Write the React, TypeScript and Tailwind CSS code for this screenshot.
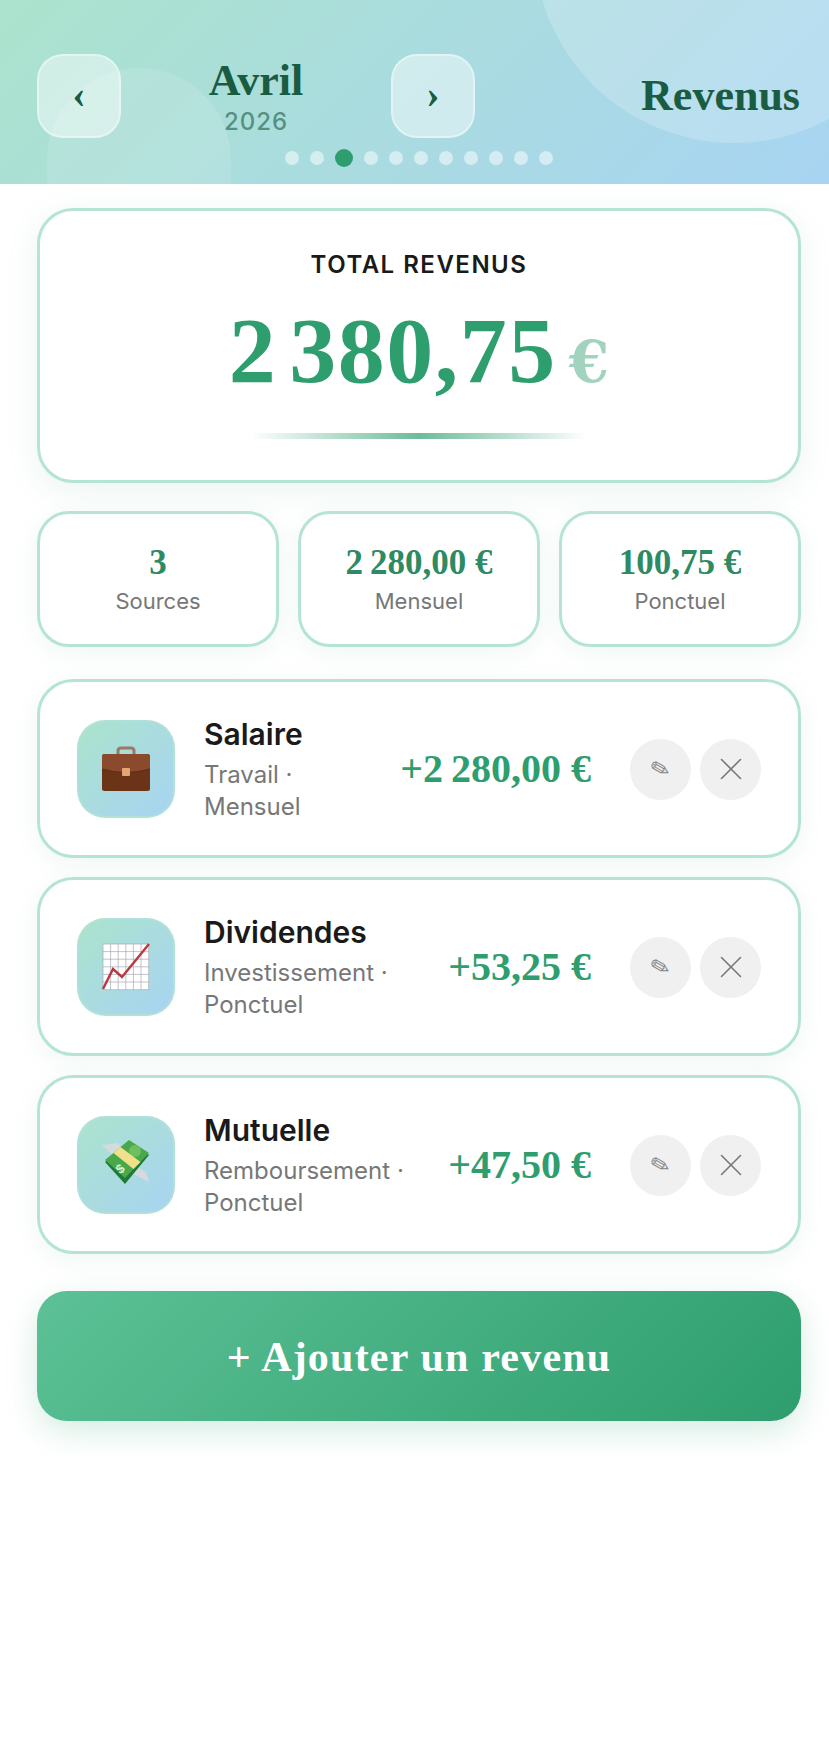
import { X } from "lucide-react";

const serif = "font-['Liberation_Serif',serif] font-bold";
const sans = "font-['Inter',sans-serif]";

const Briefcase = () => (
  <svg width="50" height="46" viewBox="0 0 50 46">
    <path d="M17 9 V5 Q17 2 20 2 H30 Q33 2 33 5 V9" fill="none" stroke="#9a7a60" strokeWidth="3" />
    <rect x="1" y="8" width="48" height="37" rx="2.5" fill="#6b3419" />
    <path d="M1 10.5 Q1 8 3.5 8 H46.5 Q49 8 49 10.5 V23 Q25 30 1 23 Z" fill="#8a4a2b" />
    <path d="M1 23 Q25 30 49 23" fill="none" stroke="#5a2c16" strokeWidth="1" />
    <rect x="21" y="22" width="8" height="8" rx="1" fill="#e3a574" />
  </svg>
);

const Chart = () => {
  const lines = [0, 1, 2, 3, 4, 5, 6];
  return (
    <svg width="48" height="48" viewBox="0 0 48 48">
      <rect x="1" y="1" width="46" height="46" fill="#fff" />
      {lines.map((i) => (
        <g key={i} stroke="#a8a8b4" strokeWidth="0.7">
          <line x1={1 + i * 7.6} y1="1" x2={1 + i * 7.6} y2="47" />
          <line x1="1" y1={1 + i * 7.6} x2="47" y2={1 + i * 7.6} />
        </g>
      ))}
      <path d="M1 46 L11 26 L20 34 L47 1" fill="none" stroke="#b83a40" strokeWidth="2.4" />
    </svg>
  );
};

const Money = () => (
  <svg width="48" height="50" viewBox="0 0 48 50">
    <path d="M0 5 L16 3 L24 14 L14 18 Z" fill="#d5dadd" />
    <path d="M47 42 L44 32 L30 24 L28 32 Z" fill="#d5dadd" />
    <path d="M3 22 L27 2 L47 15 L23 44 Z" fill="#1f7a35" />
    <path d="M3 20 L27 0 L47 13 L23 38 Z" fill="#48a84a" />
    <circle cx="33" cy="11" r="6" fill="#6dbf5f" />
    <path d="M11.5 13 L18.5 7 L38.5 22 L31.5 29 Z" fill="#f0e08a" />
    <text x="14" y="33" fontSize="13" fontWeight="700" fill="#d8f2d0" fontFamily="Liberation Sans, sans-serif" transform="rotate(-40 18 28)">$</text>
  </svg>
);

const stats = [
  { value: "3", label: "Sources" },
  { value: "2\u202f280,00 €", label: "Mensuel" },
  { value: "100,75 €", label: "Ponctuel" },
];

const items = [
  { name: "Salaire", sub: "Travail · Mensuel", amount: "+2\u202f280,00 €", icon: <Briefcase /> },
  { name: "Dividendes", sub: "Investissement · Ponctuel", amount: "+53,25 €", icon: <Chart /> },
  { name: "Mutuelle", sub: "Remboursement · Ponctuel", amount: "+47,50 €", icon: <Money /> },
];

const NavBtn = ({ glyph }: { glyph: string }) => (
  <button className={`${serif} flex h-[84px] w-[84px] shrink-0 items-center justify-center rounded-[26px] border-[2px] border-white/40 bg-white/45 pb-[4px] text-[40px] leading-none text-[#1a5c42]`}>
    {glyph}
  </button>
);

export default function App() {
  return (
    <div className={`${sans} min-h-[1756px] w-[829px] overflow-hidden bg-white`}>
      {/* Header */}
      <header className="relative h-[184px] overflow-hidden bg-[linear-gradient(135deg,#abe3cd,#a8d4f2)] pl-[37px] pr-[29px] pt-[54px]">
        <div className="absolute left-[534px] top-[-257px] h-[400px] w-[400px] rounded-full bg-white/20" />
        <div className="absolute left-[47px] top-[68px] h-[240px] w-[184px] rounded-[92px] bg-white/12" />
        <div className="relative flex items-center">
          <NavBtn glyph="‹" />
          <div className="flex w-[270px] flex-col items-center">
            <span className={`${serif} text-[44px] leading-[50px] text-[#1a5c42]`}>Avril</span>
            <span className="mt-[1px] text-[24px] font-medium leading-[30px] tracking-[1px] text-[#1a5c42]/60">2026</span>
          </div>
          <NavBtn glyph="›" />
          <span className={`${serif} ml-auto text-[44px] leading-none text-[#1a5c42]`}>Revenus</span>
        </div>
        <div className="relative mt-[11px] flex items-center justify-center gap-[11px]">
          {[0, 1, 2, 3, 4, 5, 6, 7, 8, 9, 10].map((i) =>
            i === 2 ? (
              <span key={i} className="h-[18px] w-[18px] rounded-full bg-[#2e9e6e]" />
            ) : (
              <span key={i} className="h-[14px] w-[14px] rounded-full bg-white/50" />
            ),
          )}
        </div>
      </header>

      <main className="flex flex-col pl-[37px] pr-[28px] pt-[24px]">
        {/* Total */}
        <section className="flex h-[275px] flex-col items-center rounded-[36px] border-[3px] border-[#b5e5d2] bg-white pt-[39px] shadow-[0_8px_32px_rgba(46,158,110,0.10)]">
          <div className="text-[24px] font-semibold leading-[30px] tracking-[1.5px] text-[#1a1a1a]">TOTAL REVENUS</div>
          <div className="mt-[20px] flex items-baseline gap-[12px]">
            <span className={`${serif} text-[94px] leading-[100px] tracking-[1.5px] text-[#2e9e6e]`}>
              2<span className="ml-[12px]">380,75</span>
            </span>
            <span className="font-['DejaVu_Serif',serif] text-[58px] font-bold leading-none text-[#2e9e6e]/45">€</span>
          </div>
          <div className="mt-[33px] h-[6px] w-[336px] rounded-full bg-gradient-to-r from-transparent via-[#2e9e6e]/70 to-transparent" />
        </section>

        {/* Stats */}
        <section className="mt-[28px] grid grid-cols-3 gap-[19px]">
          {stats.map((s) => (
            <div key={s.label} className="flex h-[136px] flex-col items-center justify-center rounded-[32px] border-[3px] border-[#b5e5d2] bg-white shadow-[0_6px_24px_rgba(46,158,110,0.08)]">
              <div className={`${serif} text-[35px] leading-[42px] text-[#2e8a63]`}>{s.value}</div>
              <div className="mt-[2px] text-[22px] leading-[30px] text-[#777]">{s.label}</div>
            </div>
          ))}
        </section>

        {/* Items */}
        <section className="mt-[32px] flex flex-col gap-[19px]">
          {items.map((it) => (
            <div key={it.name} className="flex h-[179px] items-center rounded-[36px] border-[3px] border-[#b5e5d2] bg-white px-[37px] shadow-[0_6px_24px_rgba(46,158,110,0.08)]">
              <div className="flex h-[98px] w-[98px] shrink-0 items-center justify-center rounded-[28px] border-[2px] border-[#b5e5d2]/60 bg-[linear-gradient(135deg,#abe3cd,#a8d4f2)]">
                {it.icon}
              </div>
              <div className="ml-[29px] min-w-0 flex-1 pr-[20px]">
                <div className="text-[30px] font-semibold leading-[38px] text-[#1a1a1a]">{it.name}</div>
                <div className="mt-[6px] text-[24px] leading-[32px] text-[#777]">{it.sub}</div>
              </div>
              <div className={`${serif} mr-[39px] shrink-0 text-[40px] leading-none text-[#2e9e6e]`}>{it.amount}</div>
              <div className="flex shrink-0 gap-[9px] pt-[1px]">
                <button className="flex h-[61px] w-[61px] items-center justify-center rounded-full bg-[#f0f0f0] font-['DejaVu_Sans',sans-serif] text-[24px] leading-none text-[#888]">
                  <span className="rotate-[30deg]">✏</span>
                </button>
                <button className="flex h-[61px] w-[61px] items-center justify-center rounded-full bg-[#f0f0f0] text-[#777]">
                  <X size={38} strokeWidth={1} />
                </button>
              </div>
            </div>
          ))}
        </section>

        <button className={`${serif} mt-[37px] h-[130px] rounded-[30px] bg-[linear-gradient(135deg,#5cc196,#2e9e6e)] pt-[2px] text-[42px] tracking-[1.2px] text-white shadow-[0_10px_32px_rgba(46,158,110,0.2)]`}>
          + Ajouter un revenu
        </button>
      </main>
    </div>
  );
}
